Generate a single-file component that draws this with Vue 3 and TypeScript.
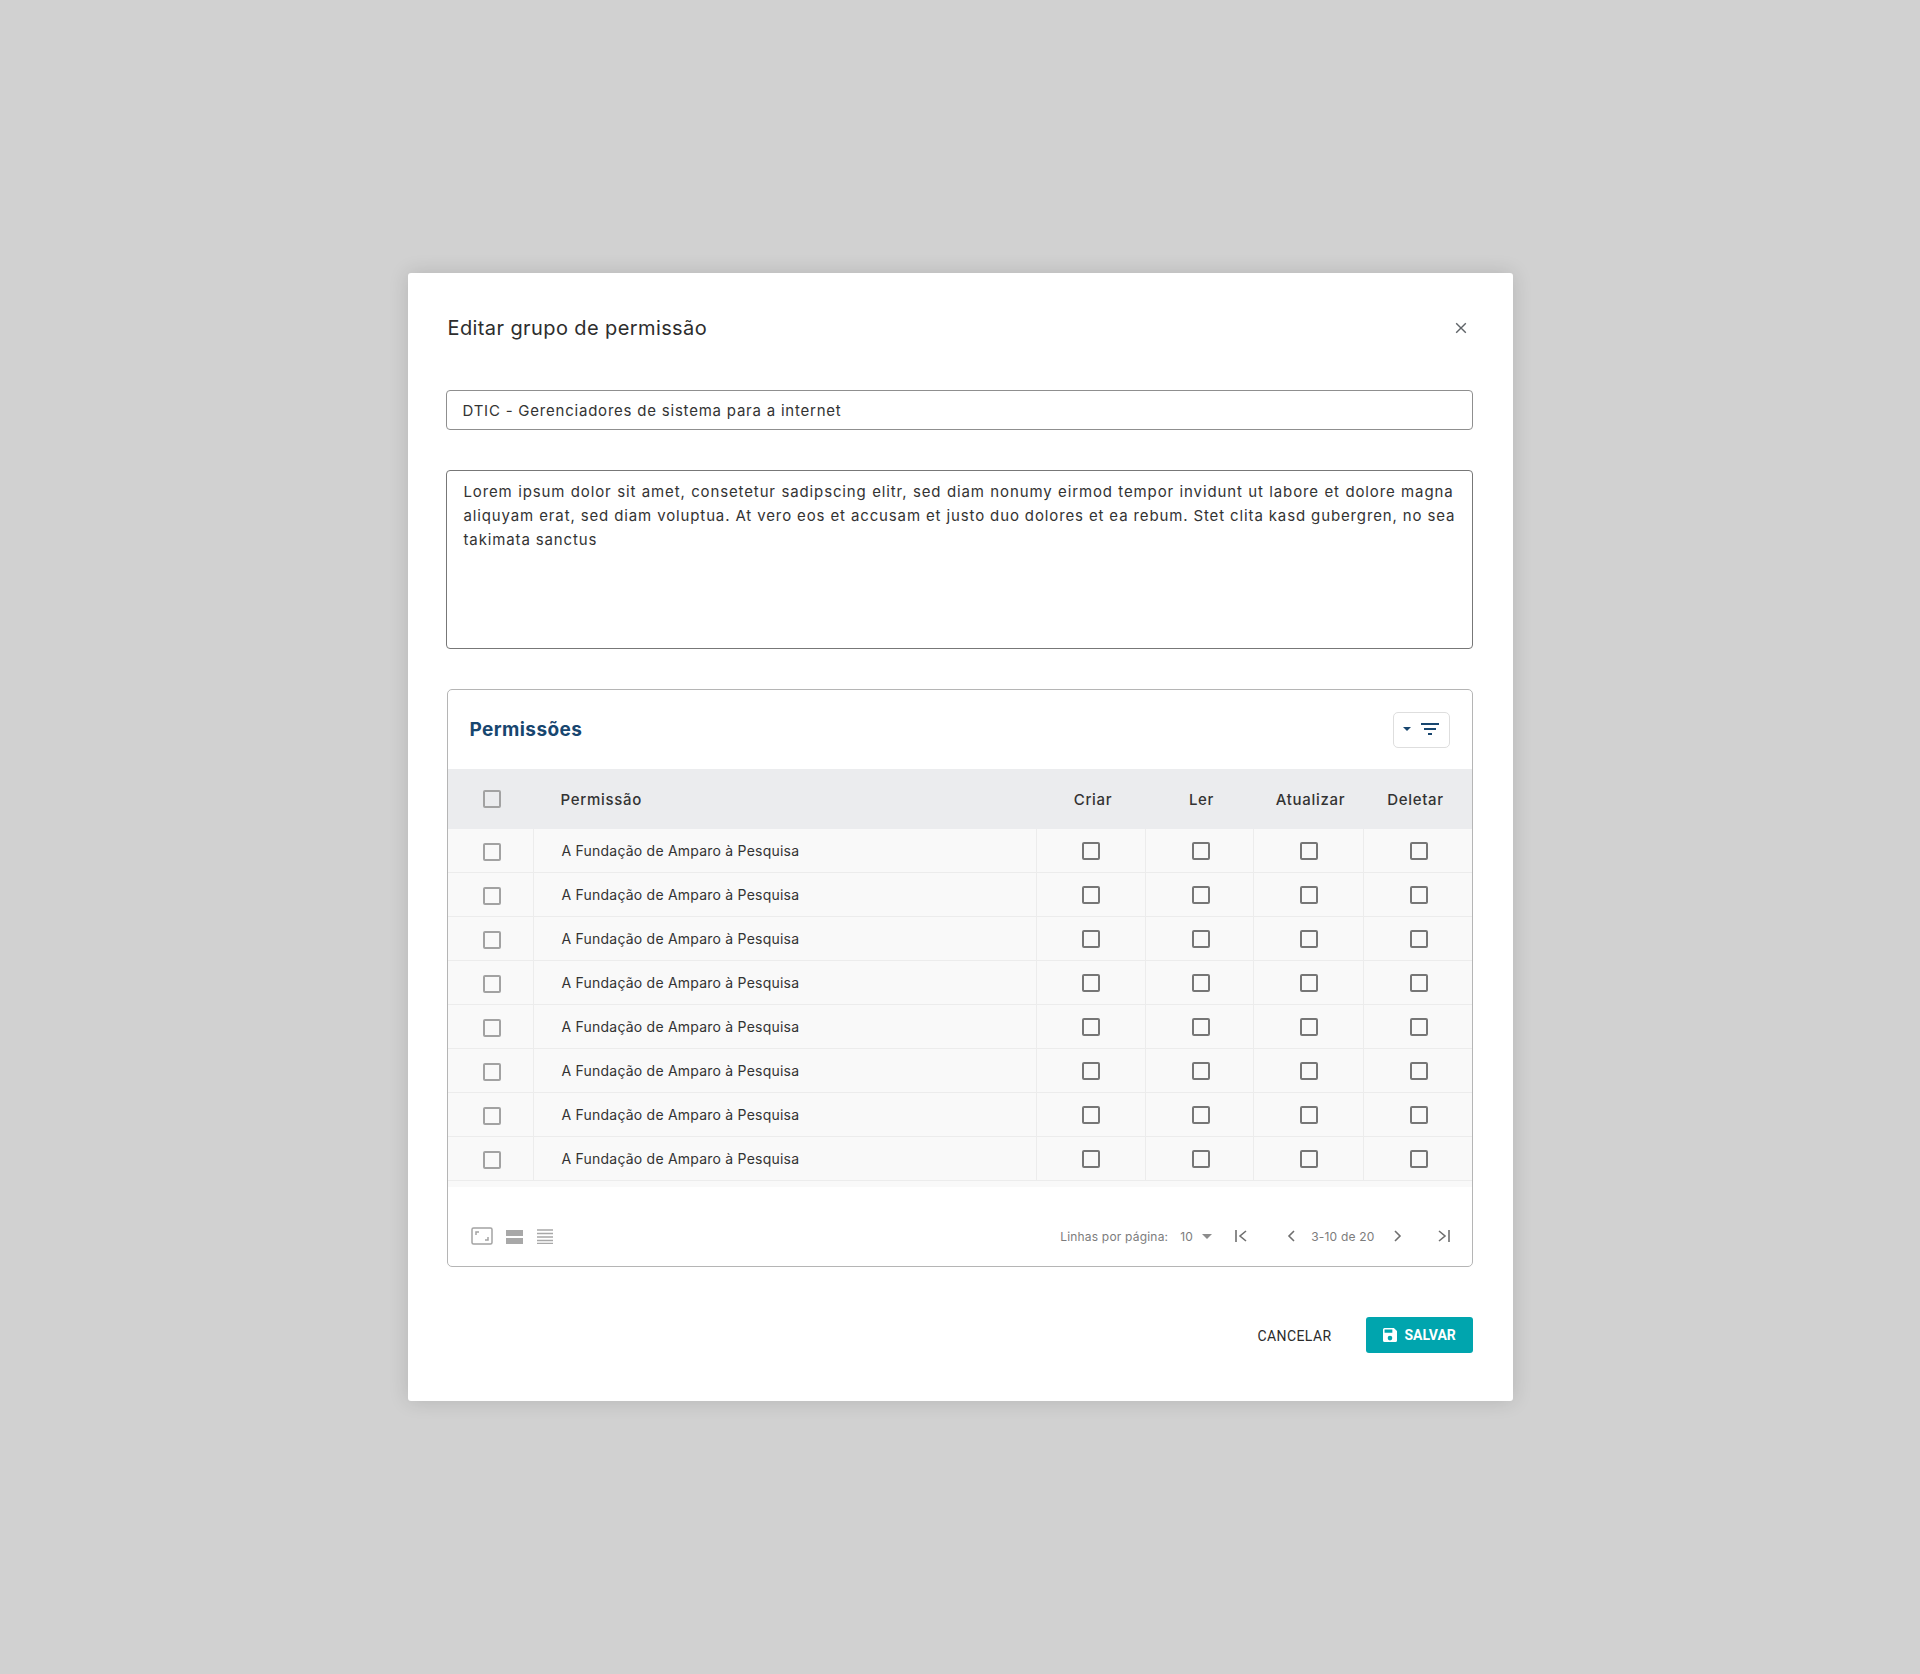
<template>
  <div class="backdrop">
    <div class="modal">
      <div class="modal-header">
        <h2 class="modal-title">Editar grupo de permissão</h2>
        <button class="close-btn" aria-label="Fechar">
          <svg width="12" height="12" viewBox="0 0 12 12"><path d="M1.2 1.2l9.6 9.6M10.8 1.2l-9.6 9.6" stroke="#5f6368" stroke-width="1.4" fill="none" /></svg>
        </button>
      </div>

      <div class="field field-input">DTIC - Gerenciadores de sistema para a internet</div>
      <div class="field field-area">
        <div class="area-line">Lorem ipsum dolor sit amet, consetetur sadipscing elitr, sed diam nonumy eirmod tempor invidunt ut labore et dolore magna</div>
        <div class="area-line">aliquyam erat, sed diam voluptua. At vero eos et accusam et justo duo dolores et ea rebum. Stet clita kasd gubergren, no sea</div>
        <div>takimata sanctus</div>
      </div>

      <section class="card">
        <div class="card-header">
          <h3 class="card-title">Permissões</h3>
          <button class="filter-btn" aria-label="Filtrar">
            <svg width="42" height="16" viewBox="0 0 42 16">
              <path d="M4 6h8l-4 4z" fill="#17466f" />
              <path d="M22 3h18M25 8h12M29 13h4" stroke="#17466f" stroke-width="2" fill="none" />
            </svg>
          </button>
        </div>

        <div class="table-row table-head">
          <div class="cell cell-check"><span class="check check-light"></span></div>
          <div class="cell cell-name">Permissão</div>
          <div v-for="col in actionCols" :key="col.label" class="cell cell-action" :class="col.cls">{{ col.label }}</div>
        </div>

        <div v-for="(row, i) in rows" :key="i" class="table-row table-body">
          <div class="cell cell-check"><span class="check check-light check-row"></span></div>
          <div class="cell cell-name">{{ row }}</div>
          <div v-for="col in actionCols" :key="col.label" class="cell cell-action" :class="col.cls"><span class="check"></span></div>
        </div>
        <div class="table-end"></div>

        <div class="card-footer">
          <div class="density">
            <svg width="22" height="18" viewBox="0 0 22 18">
              <rect x="1" y="1" width="20" height="16" rx="1.5" fill="none" stroke="#a3a3a3" stroke-width="1.5" />
              <path d="M5 8V5h3M17 10v3h-3" fill="none" stroke="#a3a3a3" stroke-width="1.5" />
            </svg>
            <svg width="18" height="15" viewBox="0 0 18 15">
              <path d="M0 1h17v6H0zM0 9h17v6H0z" fill="#a8a8a8" />
            </svg>
            <svg width="16" height="15" viewBox="0 0 16 15">
              <path d="M0 1h16M0 4.5h16M0 8h16M0 11.5h16M0 14.5h16" stroke="#a8a8a8" stroke-width="1.3" fill="none" />
            </svg>
          </div>

          <div class="pager">
            <span class="pager-label">Linhas por página:</span>
            <span class="pager-size">10</span>
            <svg class="pager-caret" width="10" height="5" viewBox="0 0 10 5"><path d="M0 0h10L5 5z" fill="#8c8c8c" /></svg>
            <svg class="pg pg-first" width="12" height="12" viewBox="0 0 12 12"><path d="M1 0v12M11 1L5 6l6 5" stroke="#6f6f6f" stroke-width="1.6" fill="none" /></svg>
            <svg class="pg pg-prev" width="8" height="12" viewBox="0 0 8 12"><path d="M7 1L2 6l5 5" stroke="#6f6f6f" stroke-width="1.6" fill="none" /></svg>
            <span class="pager-range">3-10 de 20</span>
            <svg class="pg pg-next" width="8" height="12" viewBox="0 0 8 12"><path d="M1 1l5 5-5 5" stroke="#6f6f6f" stroke-width="1.6" fill="none" /></svg>
            <svg class="pg pg-last" width="12" height="12" viewBox="0 0 12 12"><path d="M11 0v12M1 1l6 5-6 5" stroke="#6f6f6f" stroke-width="1.6" fill="none" /></svg>
          </div>
        </div>
      </section>

      <div class="modal-actions">
        <button class="btn-cancel">CANCELAR</button>
        <button class="btn-save">
          <svg width="14" height="14" viewBox="3 3 18 18"><path fill="#fff" d="M17 3H5a2 2 0 0 0-2 2v14a2 2 0 0 0 2 2h14a2 2 0 0 0 2-2V7l-4-4zm-5 16a3 3 0 1 1 0-6 3 3 0 0 1 0 6zm3-10H5V5h10v4z" /></svg>
          SALVAR
        </button>
      </div>
    </div>
  </div>
</template>

<script setup lang="ts">
interface ActionCol {
  label: string;
  cls: string;
}

const actionCols: ActionCol[] = [
  { label: 'Criar', cls: 'col-criar' },
  { label: 'Ler', cls: 'col-ler' },
  { label: 'Atualizar', cls: 'col-atualizar' },
  { label: 'Deletar', cls: 'col-deletar' }
];

const rows: string[] = Array(8).fill('A Fundação de Amparo à Pesquisa');
</script>

<style>
body {
  margin: 0;
  background: #d1d1d1;
}
</style>

<style scoped>
.backdrop {
  min-height: 1674px;
  display: flex;
  align-items: center;
  justify-content: center;
  background: #d1d1d1;
  font-family: Inter, "Liberation Sans", sans-serif;
  color: #2b2b2b;
}

.modal {
  width: 1105px;
  height: 1128px;
  box-sizing: border-box;
  padding: 0 40px 0 38px;
  background: #fff;
  border-radius: 3px;
  box-shadow: 0 0 20px rgba(0, 0, 0, 0.14);
  display: flex;
  flex-direction: column;
}

.modal-header {
  height: 117px;
  display: flex;
  align-items: flex-start;
  justify-content: space-between;
  padding-top: 41px;
  box-sizing: border-box;
}

.modal-title {
  margin: 0 0 0 2px;
  font-size: 20px;
  line-height: 28px;
  font-weight: 400;
  letter-spacing: 0.4px;
  color: #2d2d2d;
}

.close-btn {
  border: 0;
  padding: 0;
  background: none;
  margin: 8px 6px 0 0;
  height: 12px;
  display: flex;
}

.field {
  box-sizing: border-box;
  border: 1px solid #8f8f8f;
  border-radius: 4px;
  font-size: 15px;
  color: #333;
  white-space: nowrap;
}

.field-input {
  height: 40px;
  line-height: 40px;
  padding-left: 16px;
  letter-spacing: 0.78px;
}

.field-area {
  height: 179px;
  margin-top: 40px;
  padding: 9px 18px 0 17px;
  line-height: 24px;
  letter-spacing: 0.87px;
  border-color: #777;
}

.area-line {
  text-align: justify;
  text-align-last: justify;
}

.card {
  margin: 40px 0 0 1px;
  height: 578px;
  box-sizing: border-box;
  border: 1px solid #b5b5b5;
  border-radius: 5px;
  display: flex;
  flex-direction: column;
  overflow: hidden;
}

.card-header {
  height: 79px;
  flex: none;
  display: flex;
  align-items: center;
  justify-content: space-between;
  padding: 0 22px;
}

.card-title {
  margin: 0;
  font-size: 19px;
  font-weight: 700;
  letter-spacing: 0.4px;
  color: #17466f;
}

.filter-btn {
  width: 57px;
  height: 36px;
  padding: 0 0 2px 5px;
  background: #fff;
  border: 1px solid #dedede;
  border-radius: 5px;
  display: flex;
  align-items: center;
}

.table-row {
  display: grid;
  grid-template-columns: 86px 503px 109px 108px 110px 108px;
  flex: none;
}

.table-head {
  height: 60px;
  background: #ebecee;
  font-size: 15px;
  font-weight: 500;
  letter-spacing: 0.7px;
  color: #333;
}

.table-body {
  height: 44px;
  background: #f9f9f9;
  font-size: 14px;
  letter-spacing: 0.22px;
  color: #333;
}

.cell {
  display: flex;
  align-items: center;
  box-sizing: border-box;
}

.table-body .cell {
  border-bottom: 1px solid #ececec;
  border-right: 1px solid #ececec;
}

.table-body .cell:last-child {
  border-right: 0;
}

.cell-check {
  justify-content: center;
  padding-left: 2px;
}

.table-body .cell-check {
  padding-left: 3px;
}

.cell-name {
  padding-left: 28px;
}

.table-head .cell-name {
  padding-left: 27px;
}

.cell-action {
  justify-content: center;
}

.table-head .col-criar,
.table-head .col-ler,
.table-head .col-atualizar,
.table-body .col-ler {
  padding-left: 4px;
}

.table-head .col-deletar {
  padding-right: 4px;
}

.table-body .col-deletar,
.table-body .col-atualizar {
  padding-left: 2px;
}

.check {
  width: 18px;
  height: 18px;
  box-sizing: border-box;
  border: 2px solid #767676;
  border-radius: 2px;
  display: block;
}

.check-light {
  border-color: #a2a2a2;
}

.check-row {
  position: relative;
  top: 1px;
}

.table-end {
  height: 6px;
  flex: none;
  background: #f9f9f9;
}

.card-footer {
  flex: 1;
  display: flex;
  align-items: center;
  justify-content: space-between;
  padding: 19px 22px 0 23px;
}

.density {
  display: flex;
  align-items: center;
  gap: 13px;
}

.pager {
  display: flex;
  align-items: center;
  font-size: 12px;
  letter-spacing: 0.2px;
  color: #7c7c7c;
}

.pager-size {
  margin-left: 12px;
}

.pager-caret {
  margin-left: 9px;
}

.pg-first {
  margin-left: 23px;
}

.pg-prev {
  margin-left: 40px;
}

.pager-range {
  margin-left: 16px;
}

.pg-next {
  margin-left: 19px;
}

.pg-last {
  margin-left: 36px;
}

.modal-actions {
  display: flex;
  align-items: center;
  justify-content: flex-end;
  margin-top: 50px;
  height: 36px;
}

.btn-cancel {
  border: 0;
  background: none;
  padding: 2px 0 0;
  margin-right: 34px;
  font-family: Roboto, sans-serif;
  font-size: 14px;
  letter-spacing: 0.4px;
  color: #2b2b2b;
}

.btn-save {
  width: 107px;
  height: 36px;
  border: 0;
  border-radius: 3px;
  background: #00a5ae;
  color: #fff;
  font-family: Roboto, sans-serif;
  font-size: 14px;
  font-weight: 700;
  display: flex;
  align-items: center;
  gap: 8px;
  padding: 0 0 0 17px;
}
</style>
